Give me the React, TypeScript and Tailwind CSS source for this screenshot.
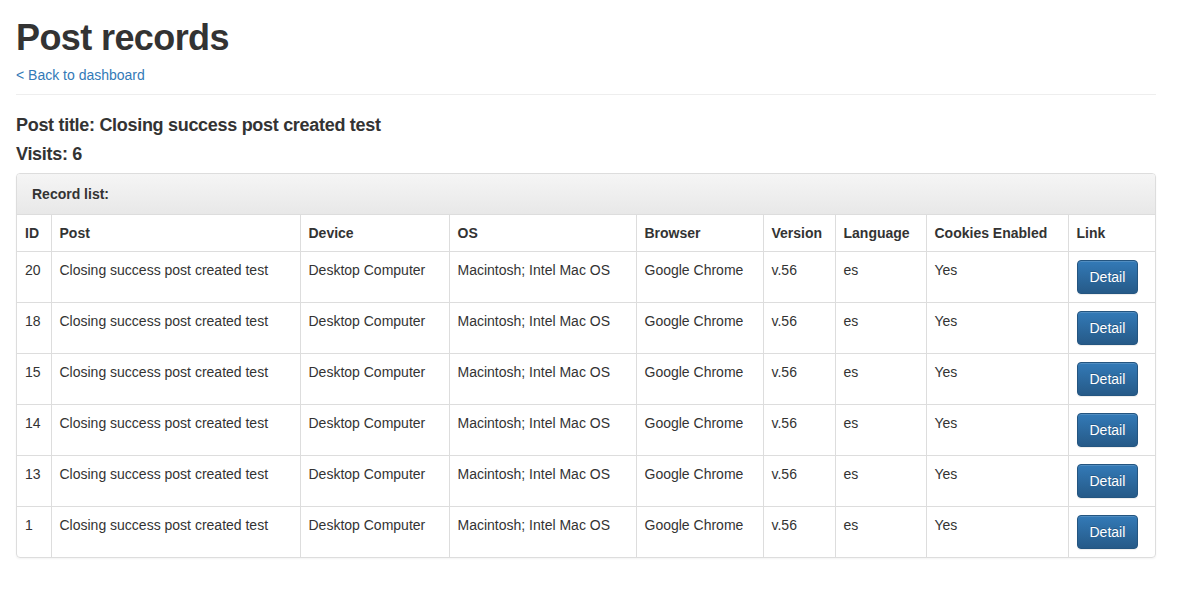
import React from "react";

const rows = [20, 18, 15, 14, 13, 1];
const headers = [
  { label: "ID", w: "w-[34px]" },
  { label: "Post", w: "w-[249px]" },
  { label: "Device", w: "w-[149px]" },
  { label: "OS", w: "w-[187px]" },
  { label: "Browser", w: "w-[127px]" },
  { label: "Version", w: "w-[72px]" },
  { label: "Language", w: "w-[91px]" },
  { label: "Cookies Enabled", w: "w-[142px]" },
  { label: "Link", w: "" },
];

export default function App() {
  return (
    <div
      className="min-h-screen bg-white text-[#333] text-[14px] leading-[20px]"
      style={{ fontFamily: '"Liberation Sans", Arial, sans-serif' }}
    >
      <div className="px-[16px] w-[1172px]">
        <h1 className="mt-[18px] mb-0 text-[36px] leading-[39.6px] font-bold tracking-[-0.6px]">
          Post records
        </h1>
        <div className="mt-[7px]">
          <a href="#" className="text-[#337ab7] no-underline">
            &lt; Back to dashboard
          </a>
        </div>
        <hr className="mt-[9px] mb-[21px] border-0 border-t border-[#eee]" />
        <h4 className="text-[18px] leading-[19.8px] font-bold tracking-[-0.3px] mb-[10px]">
          Post title: Closing success post created test
        </h4>
        <h4 className="text-[18px] leading-[19.8px] font-bold tracking-[-0.3px] mb-[8px]">
          Visits: 6
        </h4>
        <div className="border border-[#ddd] rounded-[4px] overflow-hidden shadow-[0_1px_2px_rgba(0,0,0,0.05)]">
          <div className="px-[15px] py-[10px] font-bold bg-gradient-to-b from-[#f5f5f5] to-[#e8e8e8] border-b border-[#ddd]">
            Record list:
          </div>
          <table className="w-full border-collapse table-fixed">
            <thead>
              <tr>
                {headers.map((h, i) => (
                  <th
                    key={h.label}
                    className={`${h.w} text-left font-bold p-[8px] border-[#ddd] border-b ${
                      i < headers.length - 1 ? "border-r" : ""
                    }`}
                  >
                    {h.label}
                  </th>
                ))}
              </tr>
            </thead>
            <tbody>
              {rows.map((id, ri) => {
                const cells = [
                  String(id),
                  "Closing success post created test",
                  "Desktop Computer",
                  "Macintosh; Intel Mac OS",
                  "Google Chrome",
                  "v.56",
                  "es",
                  "Yes",
                ];
                const last = ri === rows.length - 1;
                return (
                  <tr key={id}>
                    {cells.map((c, i) => (
                      <td
                        key={i}
                        className={`align-top p-[8px] border-r border-[#ddd] ${
                          last ? "" : "border-b"
                        }`}
                      >
                        {c}
                      </td>
                    ))}
                    <td className={`align-top p-[8px] border-[#ddd] ${last ? "" : "border-b"}`}>
                      <button className="px-[12px] py-[6px] text-white text-[14px] leading-[20px] rounded-[4px] border border-[#245580] bg-gradient-to-b from-[#337ab7] to-[#265a88] [text-shadow:0_-1px_0_rgba(0,0,0,0.2)] shadow-[inset_0_1px_0_rgba(255,255,255,0.15),0_1px_1px_rgba(0,0,0,0.075)]">
                        Detail
                      </button>
                    </td>
                  </tr>
                );
              })}
            </tbody>
          </table>
        </div>
      </div>
    </div>
  );
}
